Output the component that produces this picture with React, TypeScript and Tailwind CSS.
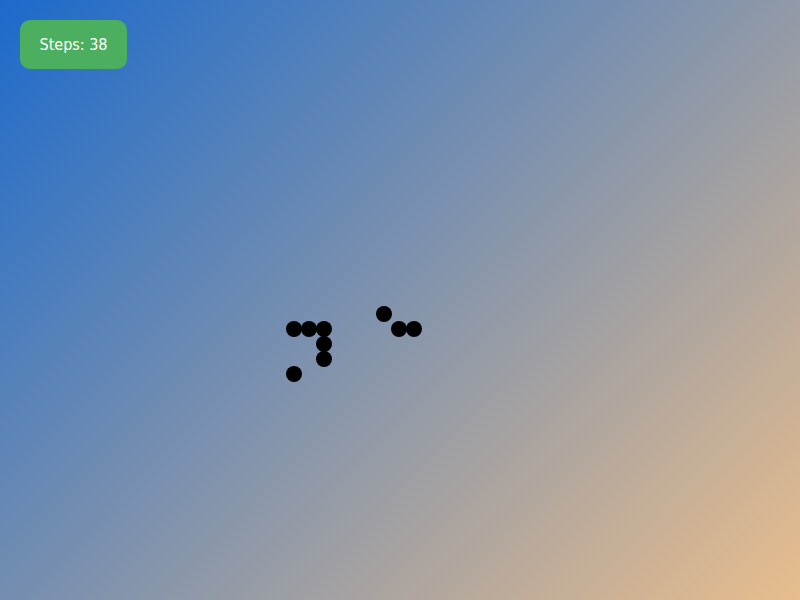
const cells: [number, number][] = [
  [294, 329],
  [309, 329],
  [324, 329],
  [324, 344],
  [324, 359],
  [294, 374],
  [384, 314],
  [399, 329],
  [414, 329],
]

export default function App() {
  return (
    <div className="relative w-[800px] h-[600px] overflow-hidden bg-[linear-gradient(135deg,#1c6acb,#e8bd8d)]">
      <div className="absolute left-5 top-5 w-[107px] rounded-[10px] bg-[#4caf5f] py-[15px] text-center font-['DejaVu_Sans_Condensed',sans-serif] text-[16px] leading-[19px] text-white">
        Steps: 38
      </div>
      {cells.map(([x, y], i) => (
        <div
          key={i}
          className="absolute w-4 h-4 rounded-full bg-black"
          style={{ left: x - 8, top: y - 8 }}
        />
      ))}
    </div>
  )
}
